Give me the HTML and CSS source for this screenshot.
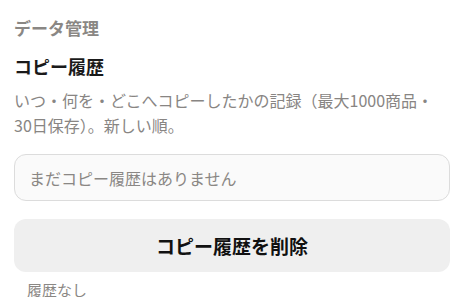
FILE: index.html
```html
<!DOCTYPE html>
<html lang="ja">
<head>
<meta charset="utf-8">
<link rel="stylesheet" href="styles.css">
</head>
<body>
<div class="page">
  <div class="section-label">データ管理</div>
  <div class="title">コピー履歴</div>
  <p class="desc">いつ・何を・どこへコピーしたかの記録（最大1000商品・30日保存）。新しい順。</p>
  <div class="history-box">まだコピー履歴はありません</div>
  <button class="danger-btn">コピー履歴を削除</button>
  <div class="status">履歴なし</div>
</div>
</body>
</html>
```

FILE: styles.css
```css
html, body {
  margin: 0;
  padding: 0;
  background: #ffffff;
}
body {
  font-family: "Noto Sans CJK JP", "Noto Sans", sans-serif;
}
.page {
  padding: 16px 11px 0 14px;
  display: flex;
  flex-direction: column;
}
.section-label {
  font-size: 17px;
  line-height: 24px;
  font-weight: 700;
  color: #8a8784;
}
.title {
  margin-top: 13px;
  font-size: 18px;
  line-height: 26px;
  font-weight: 700;
  color: #1a1a1a;
}
.desc {
  margin: 9px 0 0;
  font-size: 16px;
  line-height: 25px;
  color: #888583;
}
.history-box {
  margin-top: 16px;
  box-sizing: border-box;
  height: 47px;
  border: 1px solid #dcdcdc;
  border-radius: 12px;
  background: #fafafa;
  padding: 0 14px;
  display: flex;
  align-items: center;
  font-size: 16px;
  color: #8a8784;
}
.danger-btn {
  margin-top: 18px;
  height: 53px;
  border: none;
  border-radius: 12px;
  background: #efefef;
  font-family: inherit;
  font-size: 19px;
  font-weight: 700;
  color: #111111;
  padding: 0;
}
.status {
  margin-top: 7px;
  padding-left: 13px;
  font-size: 15px;
  line-height: 22px;
  color: #8a8784;
}
```
